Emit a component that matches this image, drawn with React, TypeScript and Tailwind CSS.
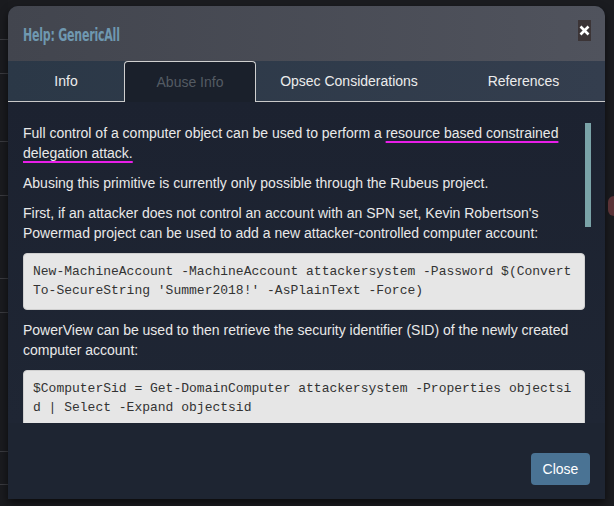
const tabs = [
  { label: "Info", w: "w-[116px]", active: false },
  { label: "Abuse Info", w: "w-[132px]", active: true },
  { label: "Opsec Considerations", w: "w-[186px]", active: false },
  { label: "References", w: "w-[163px]", active: false },
];

function CodeBlock({ lines }: { lines: string[] }) {
  return (
    <pre className="mb-[10px] rounded-[4px] border border-[#cfcfcf] bg-[#e6e6e6] px-[9px] py-[9px] font-['Liberation_Mono','DejaVu_Sans_Mono',monospace] text-[13px] leading-[18.5px] text-[#333]">
      {lines.map((l) => (
        <div key={l} className="whitespace-pre">
          {l}
        </div>
      ))}
    </pre>
  );
}

export default function App() {
  return (
    <div className="flex h-[506px] w-[614px] overflow-hidden bg-[#1b1c20] font-['Liberation_Sans',Arial,sans-serif]">
      {/* left edge of the page behind the dialog */}
      <div className="flex w-[8px] shrink-0 flex-col bg-[#1a1b1f]">
        <div className="h-[40px] border-b border-[#3a3b40]" />
        <div className="h-[34px] border-b border-[#3a3b40]" />
        <div className="h-[68px] border-b border-[#3a3b40]" />
        <div className="h-[54px] border-b border-[#3a3b40]" />
        <div className="h-[83px] border-b border-[#3a3b40]" />
        <div className="h-[34px] border-b border-[#3a3b40]" />
        <div className="h-[139px] border-b border-[#3a3b40]" />
        <div className="h-[33px] border-b border-[#3a3b40]" />
      </div>

      <div className="mt-[6px] flex h-[493px] w-[597px] shrink-0 flex-col rounded-t-[10px] bg-[#1d2330] shadow-[0_4px_8px_rgba(0,0,0,0.6)]">
        {/* header */}
        <div className="flex h-[55px] items-center justify-between rounded-t-[10px] bg-gradient-to-r from-[#42454e] to-[#50535d] pl-[15px] pr-[14px]">
          <h4 className="mt-[3px] inline-block origin-left scale-x-[0.72] font-['DejaVu_Sans_Condensed','Liberation_Sans',sans-serif] text-[17px] font-bold leading-[20px] tracking-[-0.3px] text-[#6f98b0]">
            Help: GenericAll
          </h4>
          <button className="-mt-[6px] flex h-[21px] w-[13px] items-center justify-center bg-[#3b3436]">
            <svg width="11" height="11" viewBox="0 0 11 11">
              <path d="M1.5 1.5 L9.5 9.5 M9.5 1.5 L1.5 9.5" stroke="#fff" strokeWidth="2.6" />
            </svg>
          </button>
        </div>

        {/* tabs */}
        <div className="flex h-[41px] border-b border-[#c9c9c9] bg-gradient-to-r from-[#2b3847] to-[#343e4e]">
          {tabs.map((t) =>
            t.active ? (
              <div
                key={t.label}
                className={`${t.w} -mb-px flex items-center justify-center rounded-t-[4px] border border-b-0 border-[#cfcfcf] bg-[#1a202b] text-[14px] text-[#545b63]`}
              >
                {t.label}
              </div>
            ) : (
              <div
                key={t.label}
                className={`${t.w} flex items-center justify-center text-[14px] text-[#ececec]`}
              >
                {t.label}
              </div>
            ),
          )}
        </div>

        {/* body */}
        <div className="relative h-[321px] overflow-hidden bg-gradient-to-b from-[#1c2230] to-[#1f2634] pl-[15px] pr-[20px] pt-[21px] text-[14px] leading-[20px] text-[#e9e9e9]">
          <p className="mb-[10px]">
            Full control of a computer object can be used to perform a{" "}
            <span className="underline decoration-[#e81ee8] decoration-2 underline-offset-[3px]">
              resource based constrained delegation attack.
            </span>
          </p>
          <p className="mb-[10px]">
            Abusing this primitive is currently only possible through the Rubeus project.
          </p>
          <p className="mb-[10px]">
            First, if an attacker does not control an account with an SPN set, Kevin Robertson's
            Powermad project can be used to add a new attacker-controlled computer account:
          </p>
          <CodeBlock
            lines={[
              "New-MachineAccount -MachineAccount attackersystem -Password $(Convert",
              "To-SecureString 'Summer2018!' -AsPlainText -Force)",
            ]}
          />
          <p className="mb-[10px]">
            PowerView can be used to then retrieve the security identifier (SID) of the newly
            created computer account:
          </p>
          <CodeBlock
            lines={[
              "$ComputerSid = Get-DomainComputer attackersystem -Properties objectsi",
              "d | Select -Expand objectsid",
            ]}
          />
          <div className="absolute left-[577px] top-[21px] h-[104px] w-[6px] bg-[#7aa3a8]" />
        </div>

        {/* footer */}
        <div className="flex flex-1 items-start justify-end bg-[#1e2532] pr-[15px] pt-[30px]">
          <button className="h-[32px] w-[59px] rounded-[4px] bg-[#4a7394] text-[14px] text-white">
            Close
          </button>
        </div>
      </div>

      {/* right edge of the page behind the dialog */}
      <div className="flex w-[9px] shrink-0 flex-col">
        <div className="ml-[3px] mt-[196px] h-[20px] w-[12px] rounded-full bg-[#5a3236]" />
      </div>
    </div>
  );
}
